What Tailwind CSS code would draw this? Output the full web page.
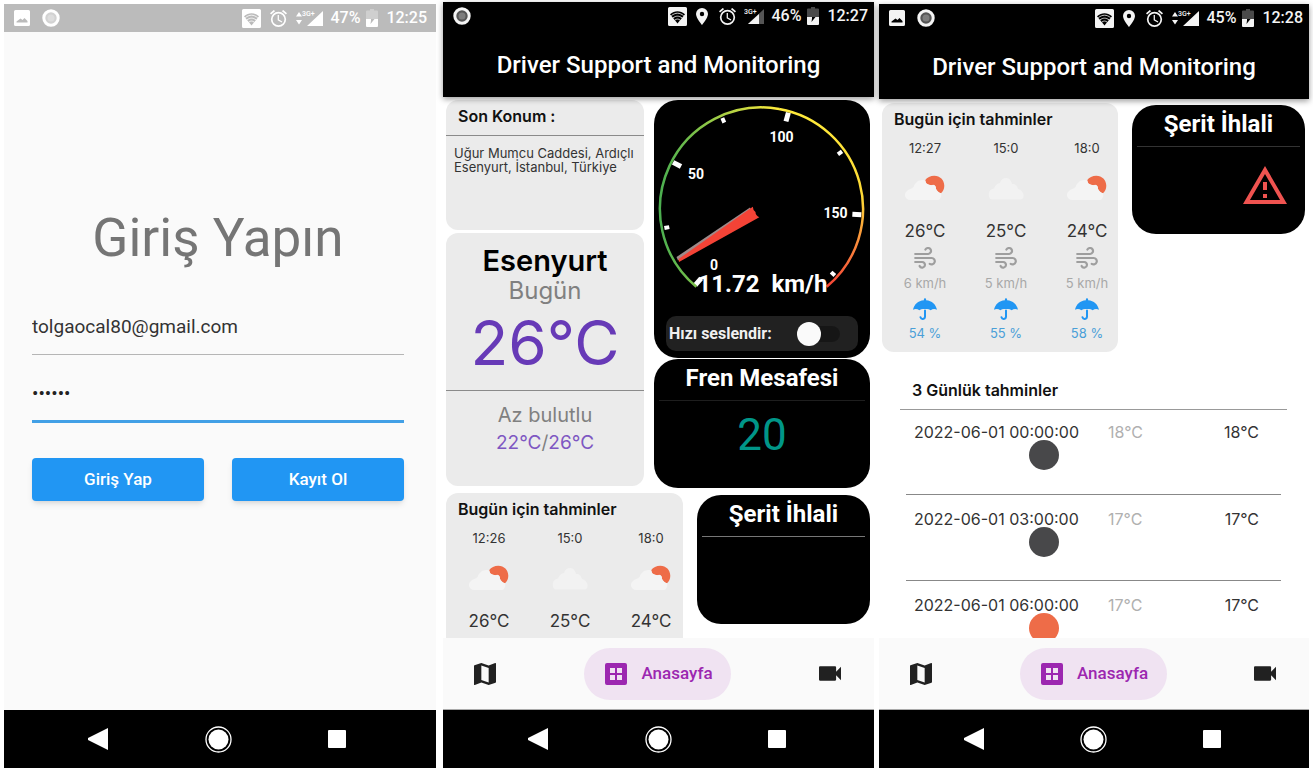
<!DOCTYPE html>
<html lang="tr">
<head>
<meta charset="utf-8">
<meta name="viewport" content="width=device-width, initial-scale=1">
<title>Driver Support and Monitoring</title>
<script src="https://cdn.jsdelivr.net/npm/@tailwindcss/browser@4"></script>
</head>
<body class="bg-white font-['Roboto',sans-serif]">
<svg class="hidden" aria-hidden="true">
  <symbol id="picture" viewBox="0 0 16 16"><path fill="currentColor" fill-rule="evenodd" d="M1.500 0h13A1.500 1.500 0 0 1 16 1.500v13a1.500 1.500 0 0 1-1.500 1.500h-13A1.500 1.500 0 0 1 0 14.500v-13A1.500 1.500 0 0 1 1.500 0zM2.500 12.500h11v-1.500l-3-3-2 2-2-1.500-4 3z"/></symbol>
  <symbol id="record" viewBox="0 0 18 18"><circle cx="9" cy="9" r="7.200" fill="currentColor" fill-opacity=".35" stroke="currentColor" stroke-width="3"/><circle cx="9" cy="9" r="3.500" fill="currentColor" fill-opacity=".25"/></symbol>
  <symbol id="wifi" viewBox="0 0 19 19"><path fill="currentColor" fill-rule="evenodd" d="M1.500 0h16A1.500 1.500 0 0 1 19 1.500v16a1.500 1.500 0 0 1-1.500 1.500h-16A1.500 1.500 0 0 1 0 17.500v-16A1.500 1.500 0 0 1 1.500 0zM2 7.300 9.500 16.500 17 7.300C12.500 3.200 6.500 3.200 2 7.300z"/><g fill="none" stroke="currentColor" stroke-width=".8"><path d="M3.300 8.700c4-3.300 8.400-3.300 12.400 0M5 10.900c3-2.300 6-2.300 9 0M6.800 13.100c2-1.400 3.400-1.400 5.400 0"/></g></symbol>
  <symbol id="pin" viewBox="0 0 12 17"><path fill="currentColor" fill-rule="evenodd" d="M6 0a6 6 0 0 1 6 6c0 4-6 11-6 11S0 10 0 6a6 6 0 0 1 6-6zm0 3.800a2.200 2.200 0 1 0 0 4.400 2.200 2.200 0 0 0 0-4.400z"/></symbol>
  <symbol id="alarm" viewBox="2 2 20 20"><path fill="currentColor" d="m22 5.720-4.600-3.860-1.290 1.530 4.600 3.860L22 5.720zM7.880 3.390 6.600 1.860 2 5.710l1.290 1.530 4.590-3.850zM12.500 8H11v6l4.750 2.850.75-1.230-4-2.370V8zM12 4a9 9 0 1 0 0 18 9 9 0 0 0 0-18zm0 16a7 7 0 1 1 0-14 7 7 0 0 1 0 14z"/></symbol>
  <symbol id="signal" viewBox="0 0 28 18"><path fill="currentColor" d="M4 3 7 7.500H1zM4 15.500 1 11h6zM28 2v15H12z"/><text x="7" y="7" font-family="Roboto, sans-serif" font-size="7" font-weight="500" fill="currentColor">3G+</text></symbol>
  <symbol id="signal-low" viewBox="8 0 20 18"><path fill="currentColor" fill-opacity=".35" d="M28 2v15H12z"/><path fill="currentColor" d="M23 7v10H12z"/><text x="8" y="7" font-family="Roboto, sans-serif" font-size="7" font-weight="500" fill="currentColor">3G+</text></symbol>
  <symbol id="battery" viewBox="0 0 12 18"><path fill="currentColor" fill-opacity=".3" d="M4 0h4v1.500h3a1 1 0 0 1 1 1V10H0V2.500a1 1 0 0 1 1-1h3z"/><path fill="currentColor" fill-rule="evenodd" d="M0 10h5v1.500L4.500 15l4-5H12v7a1 1 0 0 1-1 1H1a1 1 0 0 1-1-1z"/></symbol>
  <symbol id="map" viewBox="3 3 18 18"><path fill="currentColor" d="m20.500 3-.16.03L15 5.100 9 3 3.360 4.900c-.21.07-.36.25-.36.48V20.500c0 .28.22.5.5.5l.16-.03L9 18.900l6 2.100 5.640-1.900c.21-.07.36-.25.36-.48V3.500c0-.28-.22-.5-.5-.5zM15 19l-6-2.110V5l6 2.110V19z"/></symbol>
  <symbol id="dashboard" viewBox="0 0 22 22"><path fill="currentColor" fill-rule="evenodd" d="M2 0h18a2 2 0 0 1 2 2v18a2 2 0 0 1-2 2H2a2 2 0 0 1-2-2V2a2 2 0 0 1 2-2zM5 5v5h5V5zm7 0v5h5V5zM5 12v5h5v-5zm7 0v5h5v-5z"/></symbol>
  <symbol id="video" viewBox="3 6 18 12"><path fill="currentColor" d="M17 10.500V7c0-.55-.45-1-1-1H4c-.55 0-1 .45-1 1v10c0 .55.45 1 1 1h12c.55 0 1-.45 1-1v-3.500l4 4v-11l-4 4z"/></symbol>
  <symbol id="cloud" viewBox="0 0 40 28"><path fill="#f2f2f2" d="M6 26.500c-3 0-3.500-4-3-7 .5-2.500 3-3.500 5-4 1.500-4 3.500-5 6-5.500 1-4 4-5.500 7-5 3 .5 4 3 5 6 4 0 5 2 6 5 3 .5 5 3 5.500 6 .5 2.500-1 4.500-3.500 4.500z"/></symbol>
  <symbol id="cloud-sun" viewBox="0 0 40 28"><path fill="#ee6c48" d="M20.300 7C22 4.500 25.500 2.700 29.300 2.700c5.700 0 10 4.300 10 10 0 3-1.200 5.500-3.300 7.600-2-.5-3.500-2-5-4.300.3-2.500-1-4-2.700-4.300-2 .8-4.300.6-7.300-1.400z"/><path fill="#f4f4f4" d="M5 27a5 5 0 0 1-3-9c2-2 5-2 6.500-4 2-5 6-8 11.500-6.500l1.500 3c2.500 1.500 4.500 2 6.800 1.500 1.700 0 2.700 2 2.700 4 1.200 2.500 3 3.800 5 4.300 1 3-.5 6.700-4 6.700z"/></symbol>
  <symbol id="wind" viewBox="0 0 22 22"><path fill="none" stroke="currentColor" stroke-width="2.200" stroke-linecap="round" d="M1.200 7h13a3 3 0 1 0-2.800-4.500M1.200 11h16.500a3.200 3.200 0 1 1-2 5.800M1.200 15h7a2.800 2.800 0 1 1-2.600 4"/></symbol>
  <symbol id="umbrella" viewBox="0 0 24 22"><path fill="#2196f3" d="M10.900 2.200V1.300a1.100 1.100 0 0 1 2.200 0v.9C19 2.700 23 6.500 24 11.800c-2-1.300-4.500-1-6.300.4-1.700-1.200-3.300-1.500-4.700-1.200h-2c-1.400-.3-3 0-4.700 1.200C4.500 10.800 2 10.500 0 11.800 1 6.500 5 2.700 10.900 2.200z"/><path fill="none" stroke="#2196f3" stroke-width="2" stroke-linecap="round" d="M12 12.500v6.300a2.300 2.300 0 0 1-4.500.5"/></symbol>
  <symbol id="warning" viewBox="1 2 22 19"><path fill="#ef5350" d="M12 5.990 19.530 19H4.470L12 5.990M12 2 1 21h22L12 2zm1 14h-2v2h2v-2zm0-6h-2v4h2v-4z"/></symbol>
  <symbol id="nav-back" viewBox="0 0 20 22"><path fill="#fff" d="M20 0v22L0 12v-2z"/></symbol>
  <symbol id="nav-home" viewBox="0 0 27 27"><circle cx="13.500" cy="13.500" r="12.500" fill="none" stroke="#fff" stroke-width="1.300"/><circle cx="13.500" cy="13.500" r="10" fill="#fff"/></symbol>
</svg>

<main class="flex h-screen px-1 pb-px">

  <!-- Login -->
  <section class="mt-1 mr-[7px] flex flex-[432] flex-col bg-[#fafafa]">
    <div class="flex h-7 items-center bg-[#bbb] pr-[9px] pl-[10px] text-[16px] leading-5 font-medium text-white">
      <svg class="size-4"><use href="#picture"/></svg>
      <svg class="ml-3 size-[18px]"><use href="#record"/></svg>
      <svg class="ml-auto size-[19px]"><use href="#wifi"/></svg>
      <svg class="ml-[9px] size-[17px]"><use href="#alarm"/></svg>
      <svg class="ml-2 h-[18px] w-7"><use href="#signal"/></svg>
      <span class="ml-[7px]">47%</span>
      <svg class="ml-[6px] h-[18px] w-3"><use href="#battery"/></svg>
      <span class="ml-2">12:25</span>
    </div>
    <form class="flex flex-1 flex-col pt-[174px] pr-8 pl-7">
      <h1 class="text-center text-[53px] leading-[64px] text-[#757575]">Giriş Yapın</h1>
      <input aria-label="E-posta" type="email" value="tolgaocal80@gmail.com" class="mt-[29px] h-[56px] border-b border-[#b5b5b5] bg-transparent text-[19px] text-[#333] outline-none">
      <input aria-label="Şifre" type="password" value="123456" class="mt-2 h-[60px] border-b-[3px] border-[#42a0e6] bg-transparent pt-1 text-[19px] text-[#222] outline-none">
      <div class="mt-[35px] grid grid-cols-2 gap-7">
        <button type="button" class="h-[43px] rounded-[4px] bg-[#2196f3] text-[17px] font-medium text-white shadow-md">Giriş Yap</button>
        <button type="button" class="h-[43px] rounded-[4px] bg-[#2196f3] text-[17px] font-medium text-white shadow-md">Kayıt Ol</button>
      </div>
    </form>
    <nav class="flex h-[58px] items-center justify-between bg-black pr-[90px] pl-[84px]">
      <button aria-label="Geri"><svg class="h-[22px] w-5"><use href="#nav-back"/></svg></button>
      <button aria-label="Ana ekran"><svg class="size-[27px]"><use href="#nav-home"/></svg></button>
      <button aria-label="Son uygulamalar" class="size-[18px] rounded-[1px] bg-white"></button>
    </nav>
  </section>

  <!-- Dashboard -->
  <section class="mt-[2px] mr-[5px] flex flex-[431] flex-col bg-white">
    <header class="relative z-10 h-[95px] bg-black text-white shadow-[0_2px_6px_rgba(0,0,0,0.4)]">
      <div class="flex h-7 items-center pr-[6px] pl-[10px] text-[16px] leading-5 font-medium text-[#f4f4f4]">
        <svg class="size-[18px]"><use href="#record"/></svg>
        <svg class="ml-auto size-[19px]"><use href="#wifi"/></svg>
        <svg class="ml-[9px] h-[17px] w-3"><use href="#pin"/></svg>
        <svg class="ml-[11px] size-[17px]"><use href="#alarm"/></svg>
        <svg class="ml-2 h-[18px] w-5"><use href="#signal-low"/></svg>
        <span class="ml-[7px]">46%</span>
        <svg class="ml-[6px] h-[18px] w-3"><use href="#battery"/></svg>
        <span class="ml-2">12:27</span>
      </div>
      <h1 class="mt-[19px] text-center text-[24px] leading-8 font-medium">Driver Support and Monitoring</h1>
    </header>
    <div class="min-h-0 flex-1 overflow-hidden pt-[3px] pr-1 pl-[3px] font-['Inter',sans-serif]">
      <div class="grid grid-cols-[198fr_216fr] gap-[10px]">
        <div class="flex flex-col gap-[3px]">
          <article class="h-[130px] rounded-xl bg-[#ebebeb]">
            <h2 class="border-b border-[#8a8a8a] pt-1 pb-[7px] pl-3 text-[16px] leading-6 font-semibold text-[#111]">Son Konum :</h2>
            <p class="pt-[10px] pl-2 text-[13px] leading-[14px] text-[#333]">Uğur Mumcu Caddesi, Ardıçlı<br>Esenyurt, İstanbul, Türkiye</p>
          </article>
          <article class="h-[253px] rounded-xl bg-[#ebebeb] text-center">
            <div class="h-[158px] border-b border-[#8a8a8a] pt-[10px]">
              <h2 class="text-[29px] leading-9 font-semibold text-black">Esenyurt</h2>
              <p class="text-[24px] leading-6 text-[#808080]">Bugün</p>
              <p class="text-[62px] leading-[80px] text-[#673ab7]">26°C</p>
            </div>
            <p class="pt-[10px] text-[20px] leading-7 text-[#808080]">Az bulutlu</p>
            <p class="text-[19px] leading-7 text-[#808080]"><span class="text-[#7e57c2]">22°C</span>/<span class="text-[#7e57c2]">26°C</span></p>
          </article>
        </div>
        <div class="flex flex-col gap-px font-['Roboto',sans-serif] text-white">
          <article class="rounded-[24px] bg-black pb-[7px]">
            <svg viewBox="0 0 216 216" class="w-full" role="img" aria-label="Hız göstergesi">
              <defs>
                <linearGradient id="rise" gradientUnits="userSpaceOnUse" x1="6" y1="0" x2="125" y2="0"><stop offset="0" stop-color="#4caf50"/><stop offset=".2" stop-color="#6abb4c"/><stop offset="1" stop-color="#ffeb3b"/></linearGradient>
                <linearGradient id="fall" gradientUnits="userSpaceOnUse" x1="0" y1="9" x2="0" y2="187"><stop offset="0" stop-color="#ffeb3b"/><stop offset=".5" stop-color="#fdd835"/><stop offset=".75" stop-color="#fb8c3c"/><stop offset="1" stop-color="#f44336"/></linearGradient>
              </defs>
              <g stroke="#fff">
                <g stroke-width="5">
                  <path d="M101 0h-9" transform="translate(107.500 109) rotate(131)"/>
                  <path d="M100 0h-9" transform="translate(107.500 109) rotate(207.800)"/>
                  <path d="M100 0h-9" transform="translate(107.500 109) rotate(285.600)"/>
                  <path d="M100 0h-9" transform="translate(107.500 109) rotate(3.300)"/>
                </g>
                <g stroke-width="4">
                  <path d="M99 0h-5" transform="translate(107.500 109) rotate(168.900)"/>
                  <path d="M99 0h-5" transform="translate(107.500 109) rotate(246.700)"/>
                  <path d="M99 0h-5" transform="translate(107.500 109) rotate(324.400)"/>
                  <path d="M99 0h-5" transform="translate(107.500 109) rotate(42.200)"/>
                </g>
              </g>
              <g fill="none" stroke-width="2.500">
                <path stroke="url(#rise)" d="M42.300 186.800A101.500 101.500 0 0 1 125.100 9"/>
                <path stroke="url(#fall)" d="M125.100 9A101.500 101.500 0 0 1 172.700 186.800"/>
              </g>
              <path fill="#9e8a8a" d="M22.500 157 96 107.500l2 4-74 49z"/>
              <path fill="#f44336" d="M24.500 159 98.800 106.700q0 3 2.700 5.300 0 3.500 3.800 5.300L25 162z"/>
              <g fill="#fff" font-size="14" font-weight="700" text-anchor="middle">
                <text x="127.500" y="42">100</text><text x="42" y="79">50</text><text x="181.500" y="118">150</text><text x="60" y="170">0</text>
                <text x="108.500" y="192" font-size="24" xml:space="preserve">11.72  km/h</text>
              </g>
            </svg>
            <label class="mr-3 ml-3 flex h-[35px] items-center justify-between rounded-[10px] bg-[#212121] pr-[18px] pl-[3px] text-[16px] font-bold text-[#f0f0f0]">Hızı seslendir:
              <input type="checkbox" role="switch" class="relative h-4 w-[43px] appearance-none rounded-full bg-linear-to-r from-[#212121] from-40% to-[#161616] to-40% before:absolute before:-top-1 before:left-0 before:size-6 before:rounded-full before:bg-[#fafafa]">
            </label>
          </article>
          <article class="h-[129px] rounded-[24px] bg-black px-[5px] text-center">
            <h2 class="border-b border-[#1e1e1e] pt-1 pb-[7px] text-[24px] leading-[30px] font-bold">Fren Mesafesi</h2>
            <p class="pt-2 text-[44px] leading-[52px] text-[#009688]">20</p>
          </article>
        </div>
      </div>
      <div class="mt-[5px] grid grid-cols-[237fr_173fr] items-start gap-[14px]">
        <article class="h-[248px] rounded-xl bg-[#ebebeb]">
          <h2 class="pt-1 pl-3 text-[16px] leading-6 font-semibold text-[#111]">Bugün için tahminler</h2>
          <ul class="flex justify-between pt-[7px] pr-[9px] pl-5 text-[#333]">
            <li class="flex w-[46px] flex-col items-center"><time class="text-[13px] leading-5">12:26</time><svg class="mt-[15px] h-7 w-10"><use href="#cloud-sun"/></svg><span class="mt-[18px] text-[17px] leading-6">26°C</span></li>
            <li class="flex w-[46px] flex-col items-center"><time class="text-[13px] leading-5">15:0</time><svg class="mt-[15px] h-7 w-10"><use href="#cloud"/></svg><span class="mt-[18px] text-[17px] leading-6">25°C</span></li>
            <li class="flex w-[46px] flex-col items-center"><time class="text-[13px] leading-5">18:0</time><svg class="mt-[15px] h-7 w-10"><use href="#cloud-sun"/></svg><span class="mt-[18px] text-[17px] leading-6">24°C</span></li>
          </ul>
        </article>
        <article class="mt-[2px] h-[129px] rounded-[24px] bg-black px-[5px] text-center font-['Roboto',sans-serif] text-white">
          <h2 class="border-b border-[#777] pt-1 pb-[7px] text-[24px] leading-[30px] font-bold">Şerit İhlali</h2>
        </article>
      </div>
    </div>
    <nav class="flex h-[72px] items-center justify-between border-b border-[#aaa] bg-[#fafafa] pr-[33px] pl-[31px] text-[#212121]">
      <a href="#harita" aria-label="Harita"><svg class="size-[22px]"><use href="#map"/></svg></a>
      <a href="#anasayfa" class="flex h-[52px] w-[147px] items-center justify-center gap-[14px] rounded-full bg-[#f0e3f2] pl-[3px] text-[17px] font-medium text-[#9c27b0]"><svg class="size-[22px]"><use href="#dashboard"/></svg>Anasayfa</a>
      <a href="#kamera" aria-label="Kamera"><svg class="h-[15px] w-[22px]"><use href="#video"/></svg></a>
    </nav>
    <nav class="flex h-[58px] items-center justify-between bg-black pr-[88px] pl-[85px]">
      <button aria-label="Geri"><svg class="h-[22px] w-5"><use href="#nav-back"/></svg></button>
      <button aria-label="Ana ekran"><svg class="size-[27px]"><use href="#nav-home"/></svg></button>
      <button aria-label="Son uygulamalar" class="size-[18px] rounded-[1px] bg-white"></button>
    </nav>
  </section>

  <!-- Forecast -->
  <section class="mt-1 flex flex-[430] flex-col bg-white">
    <header class="relative z-10 h-[95px] bg-black text-white shadow-[0_2px_6px_rgba(0,0,0,0.4)]">
      <div class="flex h-7 items-center pr-[6px] pl-[10px] text-[16px] leading-5 font-medium text-[#f4f4f4]">
        <svg class="size-4"><use href="#picture"/></svg>
        <svg class="ml-3 size-[18px]"><use href="#record"/></svg>
        <svg class="ml-auto size-[19px]"><use href="#wifi"/></svg>
        <svg class="ml-[9px] h-[17px] w-3"><use href="#pin"/></svg>
        <svg class="ml-[11px] size-[17px]"><use href="#alarm"/></svg>
        <svg class="ml-2 h-[18px] w-7"><use href="#signal"/></svg>
        <span class="ml-[7px]">45%</span>
        <svg class="ml-[6px] h-[18px] w-3"><use href="#battery"/></svg>
        <span class="ml-2">12:28</span>
      </div>
      <h1 class="mt-[19px] text-center text-[24px] leading-8 font-medium">Driver Support and Monitoring</h1>
    </header>
    <div class="min-h-0 flex-1 overflow-hidden pt-1 pr-1 pl-[3px] font-['Inter',sans-serif]">
      <div class="grid grid-cols-[236fr_173fr] items-start gap-[14px]">
        <article class="h-[249px] rounded-xl bg-[#ebebeb]">
          <h2 class="pt-1 pl-3 text-[16px] leading-6 font-semibold text-[#111]">Bugün için tahminler</h2>
          <ul class="flex justify-between pt-[7px] pr-2 pl-5 text-[#333]">
            <li class="flex w-[46px] flex-col items-center"><time class="text-[13px] leading-5">12:27</time><svg class="mt-[15px] h-7 w-10"><use href="#cloud-sun"/></svg><span class="mt-[18px] text-[17px] leading-6">26°C</span><svg class="mt-1 size-[22px] text-[#9e9e9e]"><use href="#wind"/></svg><span class="mt-1 text-[13px] leading-5 whitespace-nowrap text-[#a8a8a8]">6 km/h</span><svg class="mt-[5px] h-[22px] w-6"><use href="#umbrella"/></svg><span class="mt-[3px] text-[13px] leading-5 whitespace-nowrap text-[#4a9fd8]">54 %</span></li>
            <li class="flex w-[46px] flex-col items-center"><time class="text-[13px] leading-5">15:0</time><svg class="mt-[15px] h-7 w-10"><use href="#cloud"/></svg><span class="mt-[18px] text-[17px] leading-6">25°C</span><svg class="mt-1 size-[22px] text-[#9e9e9e]"><use href="#wind"/></svg><span class="mt-1 text-[13px] leading-5 whitespace-nowrap text-[#a8a8a8]">5 km/h</span><svg class="mt-[5px] h-[22px] w-6"><use href="#umbrella"/></svg><span class="mt-[3px] text-[13px] leading-5 whitespace-nowrap text-[#4a9fd8]">55 %</span></li>
            <li class="flex w-[46px] flex-col items-center"><time class="text-[13px] leading-5">18:0</time><svg class="mt-[15px] h-7 w-10"><use href="#cloud-sun"/></svg><span class="mt-[18px] text-[17px] leading-6">24°C</span><svg class="mt-1 size-[22px] text-[#9e9e9e]"><use href="#wind"/></svg><span class="mt-1 text-[13px] leading-5 whitespace-nowrap text-[#a8a8a8]">5 km/h</span><svg class="mt-[5px] h-[22px] w-6"><use href="#umbrella"/></svg><span class="mt-[3px] text-[13px] leading-5 whitespace-nowrap text-[#4a9fd8]">58 %</span></li>
          </ul>
        </article>
        <article class="mt-[2px] h-[129px] rounded-[24px] bg-black px-[5px] text-center font-['Roboto',sans-serif] text-white">
          <h2 class="border-b border-[#333] pt-1 pb-[7px] text-[24px] leading-[30px] font-bold">Şerit İhlali</h2>
          <svg class="mt-[19px] mr-[13px] ml-auto h-[38px] w-11" role="img" aria-label="Uyarı"><use href="#warning"/></svg>
        </article>
      </div>
      <h2 class="mt-[26px] mr-[18px] ml-[18px] border-b border-[#999] pb-[7px] pl-3 text-[16px] leading-6 font-semibold text-[#111]">3 Günlük tahminler</h2>
      <div class="mx-6">
        <table class="w-full border-collapse text-[16px] leading-4 text-[#333]">
          <tbody>
            <tr class="h-[84px] border-b border-[#888] align-top">
              <td class="w-[186px] pt-[14px] pl-2"><div class="flex w-fit flex-col"><time>2022-06-01 00:00:00</time><svg class="mr-5 size-[30px] self-end" viewBox="0 0 30 30"><circle cx="15" cy="15" r="15" fill="#48484a"/></svg></div></td>
              <td class="pt-[14px] pl-4 text-[#b0b0b0]">18°C</td>
              <td class="pt-[14px] pr-[22px] text-right">18°C</td>
            </tr>
            <tr class="h-[86px] border-b border-[#888] align-top">
              <td class="pt-4 pl-2"><div class="flex w-fit flex-col"><time>2022-06-01 03:00:00</time><svg class="mr-5 size-[30px] self-end" viewBox="0 0 30 30"><circle cx="15" cy="15" r="15" fill="#48484a"/></svg></div></td>
              <td class="pt-4 pl-4 text-[#b0b0b0]">17°C</td>
              <td class="pt-4 pr-[22px] text-right">17°C</td>
            </tr>
            <tr class="h-[86px] align-top">
              <td class="pt-4 pl-2"><div class="flex w-fit flex-col"><time>2022-06-01 06:00:00</time><svg class="mr-5 size-[30px] self-end" viewBox="0 0 30 30"><circle cx="15" cy="15" r="15" fill="#ee6c48"/></svg></div></td>
              <td class="pt-4 pl-4 text-[#b0b0b0]">17°C</td>
              <td class="pt-4 pr-[22px] text-right">17°C</td>
            </tr>
          </tbody>
        </table>
      </div>
    </div>
    <nav class="flex h-[72px] items-center justify-between border-b border-[#aaa] bg-[#fafafa] pr-[33px] pl-[31px] text-[#212121]">
      <a href="#harita" aria-label="Harita"><svg class="size-[22px]"><use href="#map"/></svg></a>
      <a href="#anasayfa" class="flex h-[52px] w-[147px] items-center justify-center gap-[14px] rounded-full bg-[#f0e3f2] pl-[3px] text-[17px] font-medium text-[#9c27b0]"><svg class="size-[22px]"><use href="#dashboard"/></svg>Anasayfa</a>
      <a href="#kamera" aria-label="Kamera"><svg class="h-[15px] w-[22px]"><use href="#video"/></svg></a>
    </nav>
    <nav class="flex h-[58px] items-center justify-between bg-black pr-[88px] pl-[85px]">
      <button aria-label="Geri"><svg class="h-[22px] w-5"><use href="#nav-back"/></svg></button>
      <button aria-label="Ana ekran"><svg class="size-[27px]"><use href="#nav-home"/></svg></button>
      <button aria-label="Son uygulamalar" class="size-[18px] rounded-[1px] bg-white"></button>
    </nav>
  </section>
</main>
</body>
</html>
